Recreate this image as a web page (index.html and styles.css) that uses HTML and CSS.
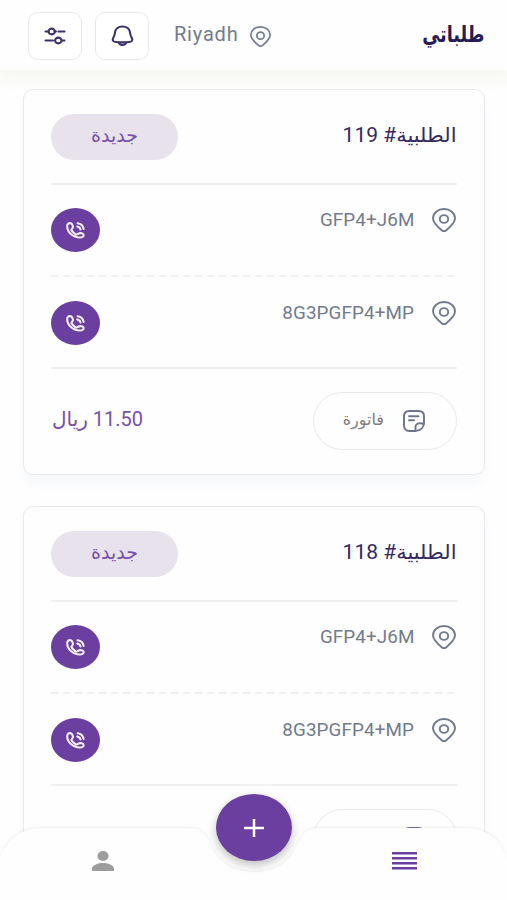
FILE: index.html
```html
<!DOCTYPE html>
<html lang="ar" dir="rtl">
<head>
    <meta charset="UTF-8">
    <meta name="viewport" content="width=device-width, initial-scale=1.0">
    <title>طلباتي</title>
    <link rel="stylesheet" href="styles.css">
</head>
<body>
    <!-- Shared icons -->
    <svg class="icon-defs" width="0" height="0">
        <symbol id="pin" viewBox="0 0 24 24">
            <path d="M12 1C5.900 1 1 5 1 10.200c0 4.300 3.700 7.800 8.700 12 1.800 1.500 2.800 1.500 4.600 0C19.300 18 23 14.500 23 10.200 23 5 18.100 1 12 1z"/>
            <ellipse cx="12" cy="11" rx="4.200" ry="3.900"/>
        </symbol>
        <symbol id="phone" viewBox="0 0 20 18">
            <path d="M5 1.400C2.900.7 1.200 2 1.200 4.500c0 6.200 6 11.900 13.300 11.900 2.800 0 4.400-1.200 4.100-2.800-.3-1.600-3.400-2.200-5.100-1.500-1.200.5-1.500 1.400-2.700 1.100-1.900-.5-4.600-3.200-5.100-4.800-.3-1 1.200-1.400 1.500-2.500.4-1.500-.7-4-2.200-4.500z"/>
            <path d="M11.800 4.800c1.900.3 3.100 1.400 3.500 3.100M12.200 1.300c3.500.5 5.900 2.700 6.400 6"/>
        </symbol>
        <symbol id="note" viewBox="0 0 22 22">
            <path d="M21 12V6.500Q21 1 15.500 1h-9Q1 1 1 6.500v9Q1 21 6.500 21H12c5.500 0 9-3.500 9-9z"/>
            <path d="M12 21c1.500-1.500-.5-4 1-6s5-2 8-1M6 6.200h9.500M6 10.200h5"/>
        </symbol>
    </svg>

    <header class="header">
        <h1>طلباتي</h1>
        <div class="city">
            <svg class="city-pin"><use href="#pin"/></svg>
            <span>Riyadh</span>
        </div>
        <button class="icon-button" aria-label="الإشعارات">
            <svg width="23" height="22" viewBox="0 0 23 22">
                <path d="M11.500 1.500C7 1.500 4.200 4.400 3.900 8c-.3 3.700-2.200 4.800-2.200 6.900 0 1.800 4.400 2.500 9.800 2.500s9.800-.7 9.800-2.500c0-2.100-1.900-3.200-2.200-6.900-.3-3.600-3.100-6.500-7.600-6.500z"/>
                <path d="M8 17.800c.8 2.900 6.200 2.900 7 0"/>
            </svg>
        </button>
        <button class="icon-button" aria-label="تصفية">
            <svg width="22" height="20" viewBox="0 0 22 20">
                <path d="M1.500 5.500h3M10.500 5.500H12M14.500 5.500H20.500M1.500 14.500h7.500M18 14.500h2.500"/>
                <ellipse cx="7.700" cy="5.500" rx="3.200" ry="2.900"/>
                <ellipse cx="14.300" cy="14.500" rx="3.200" ry="2.900"/>
            </svg>
        </button>
    </header>

    <main class="orders">
        <!-- Order 119 -->
        <section class="order-card">
            <div class="order-head">
                <h2>الطلبية# 119</h2>
                <span class="status"><span>جديدة</span></span>
            </div>
            <div class="address">
                <svg class="pin"><use href="#pin"/></svg>
                <span class="code" dir="ltr">GFP4+J6M</span>
                <button class="call" aria-label="اتصال"><svg><use href="#phone"/></svg></button>
            </div>
            <div class="address dashed">
                <svg class="pin"><use href="#pin"/></svg>
                <span class="code" dir="ltr">8G3PGFP4+MP</span>
                <button class="call" aria-label="اتصال"><svg><use href="#phone"/></svg></button>
            </div>
            <div class="order-foot">
                <button class="invoice"><svg><use href="#note"/></svg><span>فاتورة</span></button>
                <span class="price">11.50 ريال</span>
            </div>
        </section>

        <!-- Order 118 -->
        <section class="order-card">
            <div class="order-head">
                <h2>الطلبية# 118</h2>
                <span class="status"><span>جديدة</span></span>
            </div>
            <div class="address">
                <svg class="pin"><use href="#pin"/></svg>
                <span class="code" dir="ltr">GFP4+J6M</span>
                <button class="call" aria-label="اتصال"><svg><use href="#phone"/></svg></button>
            </div>
            <div class="address dashed">
                <svg class="pin"><use href="#pin"/></svg>
                <span class="code" dir="ltr">8G3PGFP4+MP</span>
                <button class="call" aria-label="اتصال"><svg><use href="#phone"/></svg></button>
            </div>
            <div class="order-foot">
                <button class="invoice"><svg><use href="#note"/></svg><span>فاتورة</span></button>
            </div>
        </section>
    </main>

    <nav class="bottom-nav">
        <svg class="nav-shape" viewBox="0 0 507 84">
            <path d="M0 84V44C4 25 20 12 42 12H188C202 12 206 18 211 29C218 46 233 56 254 56C275 56 290 46 297 29C302 18 306 12 320 12H465C487 12 503 25 507 44V84z"/>
        </svg>
        <a class="nav-item" aria-label="الطلبات">
            <svg width="25" height="18" viewBox="0 0 25 18"><path fill="#6b3fa0" d="M0 0h25v2.500H0zM0 5h25v2.500H0zM0 10h25v2.500H0zM0 15h25v2.500H0z"/></svg>
        </a>
        <a class="nav-item" aria-label="حسابي">
            <svg width="22" height="20" viewBox="0 0 22 20"><ellipse cx="11" cy="5" rx="5.500" ry="5"/><path d="M0 20v-2.500C0 14 6.500 12 11 12s11 2 11 5.500V20z"/></svg>
        </a>
        <button class="add" aria-label="طلب جديد">
            <svg width="20" height="18" viewBox="0 0 20 18"><path d="M10 0v18M0 9h20"/></svg>
        </button>
    </nav>
</body>
</html>
```
FILE: styles.css
```css
* { box-sizing: border-box; }
body { margin: 0; height: 900px; overflow: hidden; background: #fefefe; font-family: Roboto, "DejaVu Sans", sans-serif; color: #35295f; }
button { padding: 0; font: inherit; cursor: pointer; }
svg { display: block; flex: none; }
.icon-defs { position: absolute; }

/* Header */
.header { display: flex; align-items: center; height: 70px; padding: 0 22px 0 28px; background: #fefefe; box-shadow: 0 5px 16px 5px #f6f7f2; }
.header h1 { flex: 1; margin: 0; font-size: 23px; font-weight: bold; line-height: 30px; color: #271b55; transform: scaleX(.77); transform-origin: right; }
.city { display: flex; align-items: center; gap: 12px; margin-left: 25px; font-size: 20px; line-height: 28px; letter-spacing: .8px; color: #737b8c; }
.city span { margin-top: -3px; }
.city-pin { width: 21px; height: 21px; margin: 2px -1px 0 0; fill: none; stroke: #747d8e; stroke-width: 2; }
.icon-button { display: flex; align-items: center; justify-content: center; width: 54px; height: 48px; margin-top: 2px; border: 1px solid #e9eaf0; border-radius: 10px; background: #fff; }
.icon-button + .icon-button { margin-right: 13px; }
.icon-button svg { fill: none; stroke: #3d3168; stroke-width: 2.1; stroke-linecap: round; }

/* Order cards */
.orders { position: relative; padding: 19px 22px 0 23px; }
.order-card { height: 386px; margin-bottom: 31px; padding: 0 27px; border: 1px solid #e8eaef; border-radius: 10px; background: #fefefe; box-shadow: 0 9px 14px -3px #f3f5f8; }
.order-head { display: flex; justify-content: space-between; height: 95px; padding-top: 24px; border-bottom: 2px solid #f1f1f3; }
.order-head h2 { margin: 6px 1px 0 0; font-size: 20px; font-weight: 400; line-height: 30px; transform: scaleX(1.05); transform-origin: right; }
.status { display: flex; justify-content: center; width: 127px; height: 46px; border-radius: 23px; background: #e8e2ec; color: #7551a8; font-size: 19px; line-height: 43px; }
.address { display: flex; align-items: flex-start; height: 90px; padding-top: 23px; }
.dashed { height: 92px; background: repeating-linear-gradient(90deg, #f0f0f2 0 7px, transparent 7px 12px) top / 100% 2px no-repeat; padding-top: 26px; }
.pin { width: 24px; height: 24px; margin: 0 1px 0 0; fill: none; stroke: #717a8d; stroke-width: 1.9; }
.code { margin: 0 18px 0 auto; font-size: 18px; line-height: 24px; letter-spacing: .1px; color: #737b8c; transform: scaleX(1.045); transform-origin: right; }
.call { display: flex; align-items: center; justify-content: center; width: 49px; height: 44px; padding-right: 1px; border: 0; border-radius: 50%; background: #6b3fa0; }
.call svg { width: 19px; height: 17px; fill: none; stroke: #f5effb; stroke-width: 2.2; stroke-linecap: round; }
.order-foot { display: flex; align-items: flex-start; justify-content: space-between; height: 106px; padding-top: 23px; border-top: 2px solid #f1f1f3; }
.invoice { display: flex; align-items: center; width: 144px; height: 58px; padding-right: 31px; gap: 19px; border: 1px solid #e9eaed; border-radius: 29px; background: #fefefe; font-size: 16px; color: #7d7d82; }
.invoice span { margin-top: -4px; }
.invoice svg { width: 22px; height: 22px; fill: none; stroke: #6c7589; stroke-width: 1.9; stroke-linecap: round; }
.price { margin: 14px 0 0 1px; font-size: 20px; line-height: 26px; letter-spacing: .5px; color: #7850aa; }

/* Bottom navigation */
.bottom-nav { position: fixed; left: 0; right: 0; bottom: 0; display: flex; justify-content: space-between; height: 84px; padding: 0 90px 0 92px; }
.nav-shape { position: absolute; left: 0; top: 0; width: 507px; height: 84px; overflow: visible; fill: #fefefe; filter: drop-shadow(0 -1px 1px rgba(0,0,0,.06)); }
.nav-item { position: relative; display: flex; align-items: center; padding-top: 6px; }
.nav-item svg { fill: #9d9d9d; }
.add { position: absolute; left: 216px; top: -22px; display: flex; align-items: center; justify-content: center; width: 76px; height: 67px; border: 0; border-radius: 50%; background: #6b3fa0; box-shadow: 0 4px 10px rgba(0,0,0,.25); }
.add svg { stroke: #fff; stroke-width: 2.5; }
```
